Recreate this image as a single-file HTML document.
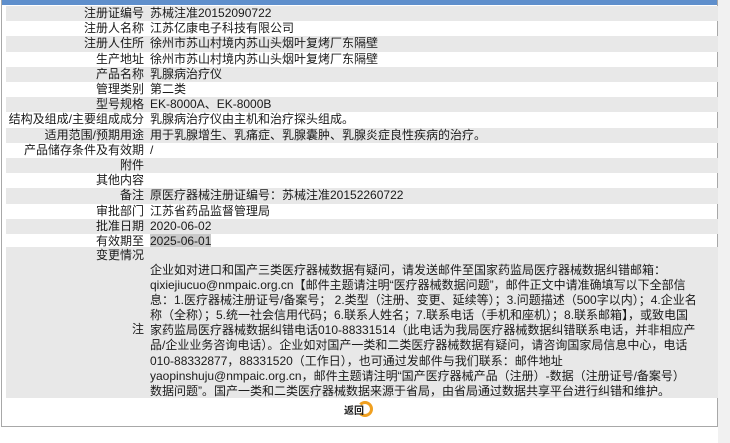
<!DOCTYPE html>
<html><head><meta charset="utf-8"><style>
*{margin:0;padding:0;box-sizing:border-box}
body{width:730px;height:443px;background:#fff;font-family:"Liberation Sans","Noto Sans CJK SC",sans-serif;font-size:12px;color:#1a1a1a;position:relative;overflow:hidden}
.sb{position:absolute;left:718px;top:0;width:12px;height:443px;background:#f1f1f1}
.box{position:absolute;left:1px;top:0;width:717px;height:427px;border:1px solid #a8a8a8;border-top:none}
.hd{position:absolute;left:0;top:0;width:715px;height:5px;background:#5f8fcc}
.row{position:absolute;left:4px;width:712px;height:15.2px;line-height:15.2px;white-space:nowrap}
.row .l{position:absolute;right:574px;text-align:right}
.row .v{position:absolute;left:144px}
.g{background:#e8e8e8}
.note{position:absolute;left:4px;top:247px;width:712px;height:151px;background:#e8e8e8}
.note .t{position:absolute;left:144px;top:16px;width:566px;line-height:15.1px;font-size:12px;white-space:nowrap}
.sel{background:#c9c9c9}
.btn{position:absolute;left:344px;top:402px;font-size:10px;font-weight:bold;color:#222}
.ring{position:absolute;left:357px;top:401px;width:16px;height:16px;border:3px solid #f0a020;border-left-color:transparent;border-radius:50%}
</style></head><body>
<div class="sb"></div>
<div class="box">
<div class="hd"></div>
<div class="row g" style="top:6px"><span class="l">注册证编号</span><span class="v">苏械注准20152090722</span></div>
<div class="row" style="top:21.2px"><span class="l">注册人名称</span><span class="v">江苏亿康电子科技有限公司</span></div>
<div class="row g" style="top:36.4px"><span class="l">注册人住所</span><span class="v">徐州市苏山村境内苏山头烟叶复烤厂东隔壁</span></div>
<div class="row" style="top:51.6px"><span class="l">生产地址</span><span class="v">徐州市苏山村境内苏山头烟叶复烤厂东隔壁</span></div>
<div class="row g" style="top:66.8px"><span class="l">产品名称</span><span class="v">乳腺病治疗仪</span></div>
<div class="row" style="top:82px"><span class="l">管理类别</span><span class="v">第二类</span></div>
<div class="row g" style="top:97.2px"><span class="l">型号规格</span><span class="v">EK-8000A、EK-8000B</span></div>
<div class="row" style="top:112.4px"><span class="l">结构及组成/主要组成成分</span><span class="v">乳腺病治疗仪由主机和治疗探头组成。</span></div>
<div class="row g" style="top:127.6px"><span class="l">适用范围/预期用途</span><span class="v">用于乳腺增生、乳痛症、乳腺囊肿、乳腺炎症良性疾病的治疗。</span></div>
<div class="row" style="top:142.8px"><span class="l">产品储存条件及有效期</span><span class="v">/</span></div>
<div class="row g" style="top:158px"><span class="l">附件</span><span class="v"></span></div>
<div class="row" style="top:173.2px"><span class="l">其他内容</span><span class="v"></span></div>
<div class="row g" style="top:188.4px"><span class="l">备注</span><span class="v">原医疗器械注册证编号：苏械注准20152260722</span></div>
<div class="row" style="top:203.6px"><span class="l">审批部门</span><span class="v">江苏省药品监督管理局</span></div>
<div class="row g" style="top:218.8px"><span class="l">批准日期</span><span class="v">2020-06-02</span></div>
<div class="row" style="top:234px"><span class="l">有效期至</span><span class="v sel">2025-06-01</span></div>
<div class="note">
<div class="row" style="top:1px;left:0"><span class="l">变更情况</span></div>
<div class="row" style="top:75px;left:0"><span class="l">注</span></div>
<div class="t">企业如对进口和国产三类医疗器械数据有疑问，请发送邮件至国家药监局医疗器械数据纠错邮箱：<br>qixiejiucuo@nmpaic.org.cn【邮件主题请注明“医疗器械数据问题”，邮件正文中请准确填写以下全部信<br>息：1.医疗器械注册证号/备案号； 2.类型（注册、变更、延续等）；3.问题描述（500字以内）；4.企业名<br>称（全称）；5.统一社会信用代码；6.联系人姓名；7.联系电话（手机和座机）；8.联系邮箱】，或致电国<br>家药监局医疗器械数据纠错电话010-88331514（此电话为我局医疗器械数据纠错联系电话，并非相应产<br>品/企业业务咨询电话）。企业如对国产一类和二类医疗器械数据有疑问，请咨询国家局信息中心，电话<br>010-88332877，88331520（工作日），也可通过发邮件与我们联系：邮件地址<br>yaopinshuju@nmpaic.org.cn，邮件主题请注明“国产医疗器械产品（注册）-数据（注册证号/备案号）<br>数据问题”。国产一类和二类医疗器械数据来源于省局，由省局通过数据共享平台进行纠错和维护。</div>
</div>
</div>
<div class="ring"></div>
<div class="btn">返回</div>
</body></html>
